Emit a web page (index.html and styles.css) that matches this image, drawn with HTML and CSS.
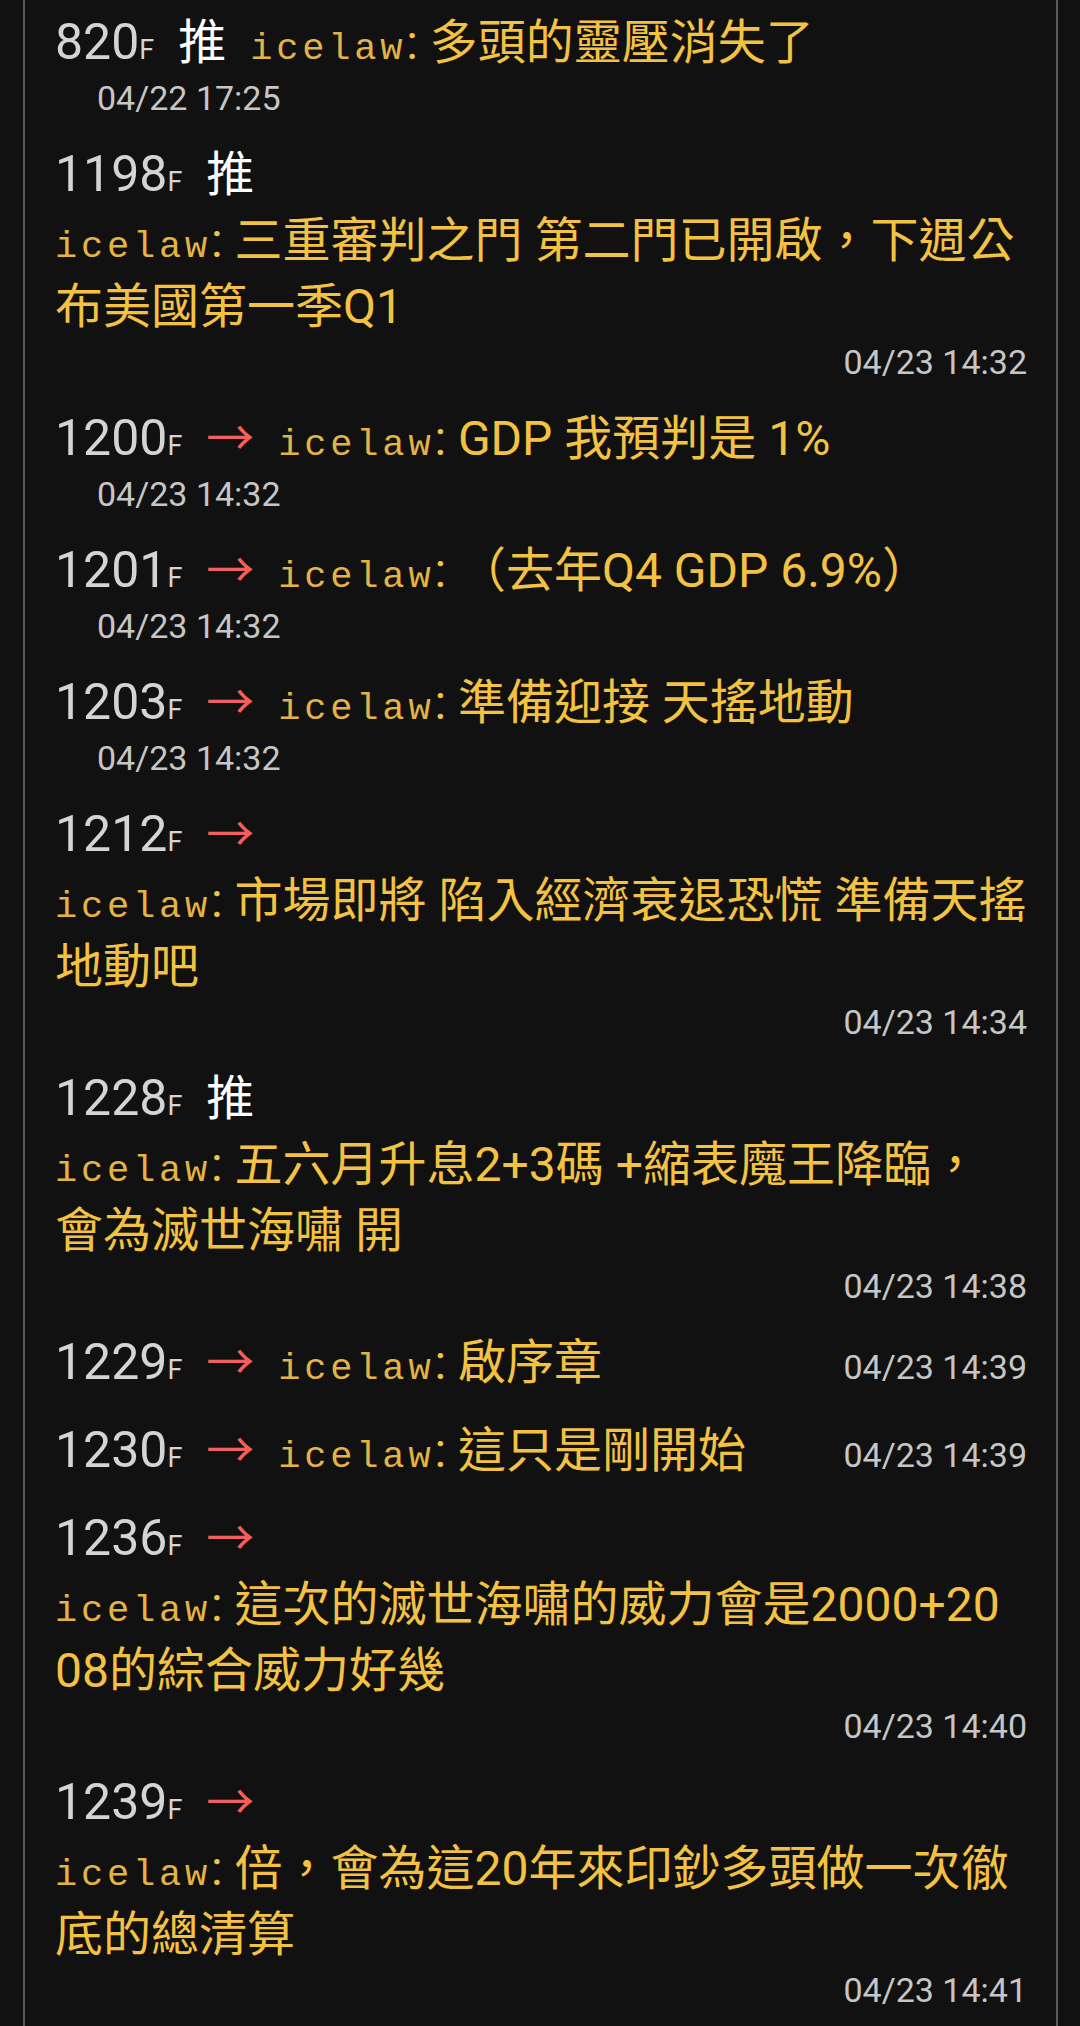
FILE: index.html
```html
<!DOCTYPE html>
<html lang="zh-Hant">
  <head>
    <meta charset="UTF-8" />
    <meta name="viewport" content="width=device-width, initial-scale=1.0" />
    <title>推文</title>
    <link rel="stylesheet" href="styles.css">
  </head>
  <body>
    <div class="board">
      <div class="comment">
        <div class="head"><span class="floor">820<span class="unit">F</span></span><span class="tag push">推</span><span class="user">icelaw</span>: 多頭的靈壓消失了</div>
        <div class="time indent">04/22 17:25</div>
      </div>

      <div class="comment">
        <div class="head"><span class="floor">1198<span class="unit">F</span></span><span class="tag push">推</span></div>
        <p class="body"><span class="user">icelaw</span>: 三重審判之門 第二門已開啟，下週公<br>布美國第一季Q1</p>
        <div class="time right">04/23 14:32</div>
      </div>

      <div class="comment">
        <div class="head"><span class="floor">1200<span class="unit">F</span></span><span class="tag arrow">→</span><span class="user">icelaw</span>: GDP 我預判是 1%</div>
        <div class="time indent">04/23 14:32</div>
      </div>

      <div class="comment">
        <div class="head"><span class="floor">1201<span class="unit">F</span></span><span class="tag arrow">→</span><span class="user">icelaw</span>: （去年Q4 GDP 6.9%）</div>
        <div class="time indent">04/23 14:32</div>
      </div>

      <div class="comment">
        <div class="head"><span class="floor">1203<span class="unit">F</span></span><span class="tag arrow">→</span><span class="user">icelaw</span>: 準備迎接 天搖地動</div>
        <div class="time indent">04/23 14:32</div>
      </div>

      <div class="comment">
        <div class="head"><span class="floor">1212<span class="unit">F</span></span><span class="tag arrow">→</span></div>
        <p class="body"><span class="user">icelaw</span>: 市場即將 陷入經濟衰退恐慌 準備天搖<br>地動吧</p>
        <div class="time right">04/23 14:34</div>
      </div>

      <div class="comment">
        <div class="head"><span class="floor">1228<span class="unit">F</span></span><span class="tag push">推</span></div>
        <p class="body"><span class="user">icelaw</span>: 五六月升息2+3碼 +縮表魔王降臨，<br>會為滅世海嘯 開</p>
        <div class="time right">04/23 14:38</div>
      </div>

      <div class="comment">
        <div class="head split">
          <span><span class="floor">1229<span class="unit">F</span></span><span class="tag arrow">→</span><span class="user">icelaw</span>: 啟序章</span>
          <span class="time">04/23 14:39</span>
        </div>
      </div>

      <div class="comment">
        <div class="head split">
          <span><span class="floor">1230<span class="unit">F</span></span><span class="tag arrow">→</span><span class="user">icelaw</span>: 這只是剛開始</span>
          <span class="time">04/23 14:39</span>
        </div>
      </div>

      <div class="comment">
        <div class="head"><span class="floor">1236<span class="unit">F</span></span><span class="tag arrow">→</span></div>
        <p class="body"><span class="user">icelaw</span>: 這次的滅世海嘯的威力會是2000+20<br>08的綜合威力好幾</p>
        <div class="time right">04/23 14:40</div>
      </div>

      <div class="comment">
        <div class="head"><span class="floor">1239<span class="unit">F</span></span><span class="tag arrow">→</span></div>
        <p class="body"><span class="user">icelaw</span>: 倍，會為這20年來印鈔多頭做一次徹<br>底的總清算</p>
        <div class="time right">04/23 14:41</div>
      </div>
    </div>
  </body>
</html>
```

FILE: styles.css
```css
* {
  margin: 0;
  padding: 0;
  box-sizing: border-box;
}

body {
  background-color: #111111;
  font-family: Roboto, "Noto Sans CJK TC", sans-serif;
  color: #f4c242;
}

.board {
  width: 1035px;
  min-height: 2026px;
  margin-left: 23px;
  padding: 10px 25px 0 30px;
  border-left: 2px solid #5a5a5a;
  border-right: 2px solid #5a5a5a;
}

.comment {
  padding-bottom: 22px;
}

.head,
.body {
  font-size: 48px;
  line-height: 66px;
  white-space: nowrap;
}

.split {
  display: flex;
  justify-content: space-between;
  align-items: baseline;
}

.floor {
  font-size: 50px;
  line-height: 1;
  color: #d4d4d4;
}

.unit {
  font-size: 27px;
}

.tag {
  margin-left: 24px;
  font-family: "Noto Sans CJK TC", sans-serif;
  line-height: 1;
}

.push {
  color: #ffffff;
}

.arrow {
  color: #f06060;
}

.user {
  font-family: "Liberation Mono", monospace;
  font-size: 37px;
  letter-spacing: 3.8px;
  line-height: 1;
  color: #e3b445;
}

.head .user {
  margin-left: 24px;
}

.time {
  font-size: 34px;
  line-height: 44px;
  color: #c6c6c6;
  white-space: nowrap;
}

.indent {
  padding-left: 42px;
}

.right {
  text-align: right;
  margin-right: 4px;
}

.split .time {
  margin-right: 4px;
}
```
